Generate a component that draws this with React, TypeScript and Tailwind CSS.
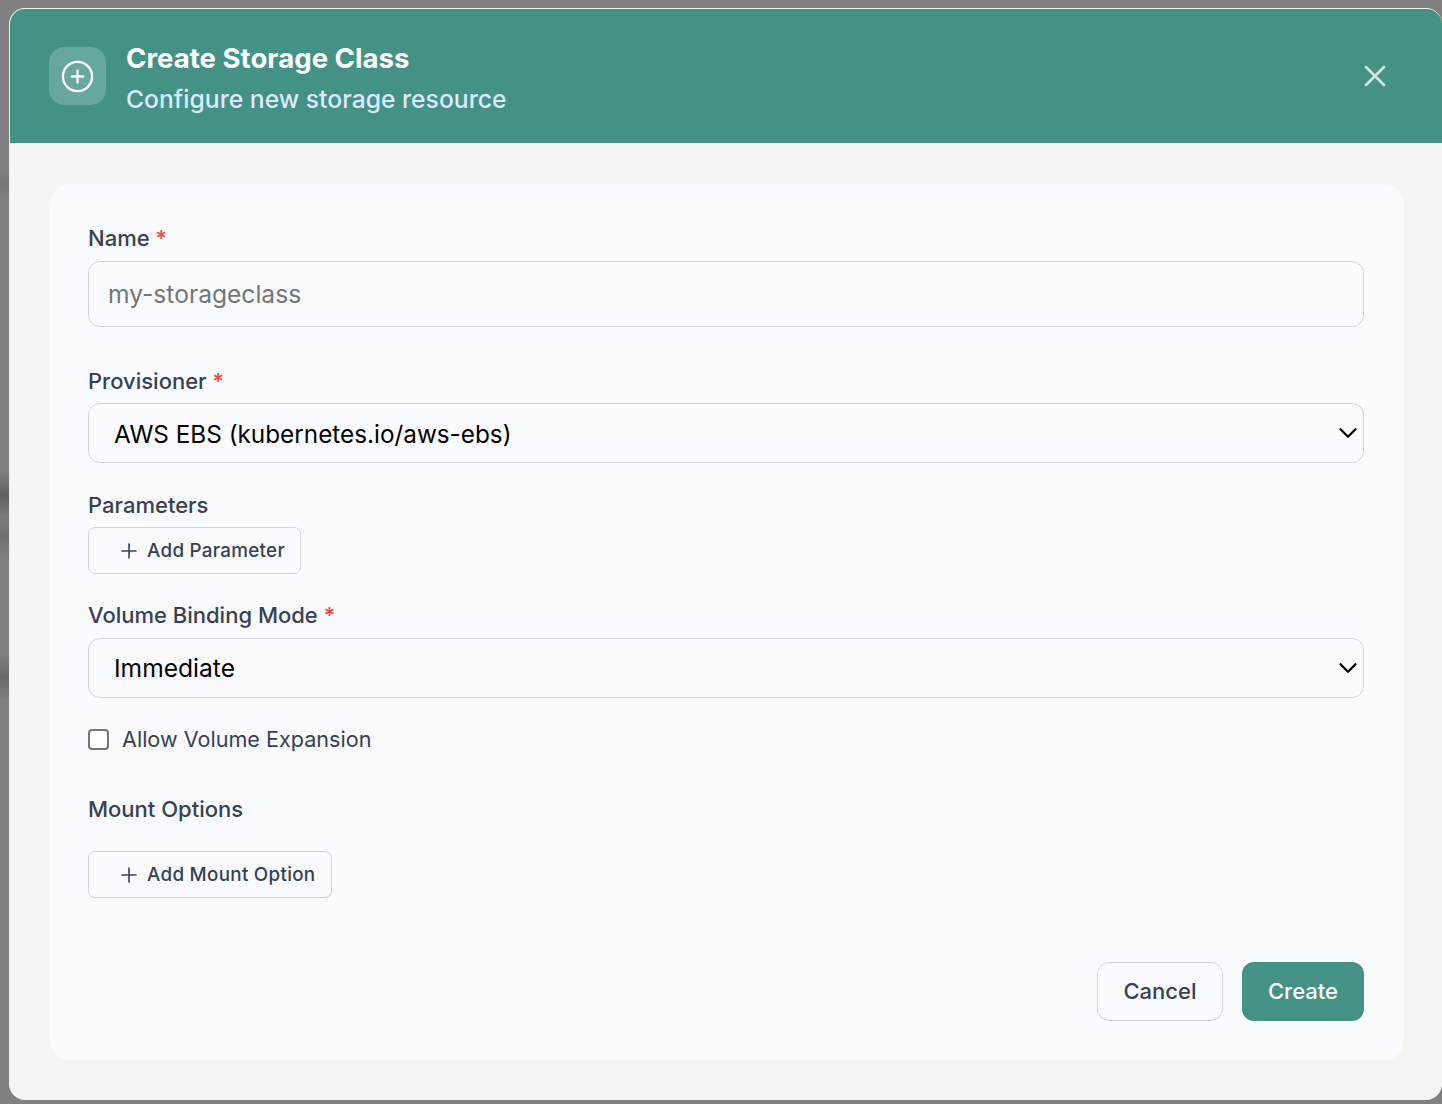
import React from "react";
import { CirclePlus, X, Plus, ChevronDown } from "lucide-react";

function Label({ children, required, className = "" }: { children: React.ReactNode; required?: boolean; className?: string }) {
  return (
    <div className={`text-[22px] leading-[28px] font-medium text-[#374151] ${className}`}>
      {children}
      {required && <span className="ml-[6px] text-[#ef4444]">*</span>}
    </div>
  );
}

function SelectBox({ value, className = "", textClass = "" }: { value: string; className?: string; textClass?: string }) {
  return (
    <div className={`relative h-[59.5px] ${className}`}>
      <select
        defaultValue={value}
        className={`h-full w-full appearance-none rounded-[12px] border border-[#d1d5db] bg-transparent pl-[25px] text-black outline-none ${textClass}`}
      >
        <option>{value}</option>
      </select>
      <ChevronDown className="pointer-events-none absolute right-[1px] top-[15px] h-[30px] w-[30px] text-black" strokeWidth={1.8} />
    </div>
  );
}

function AddButton({ label, className = "" }: { label: string; className?: string }) {
  return (
    <button className={`flex h-[47px] items-center rounded-[7px] border border-[#d1d5db] pl-[28px] text-[18.8px] font-medium tracking-[0.3px] text-[#374151] ${className}`}>
      <Plus className="mr-[6px] h-[24px] w-[24px]" strokeWidth={1.6} />
      <span className="pt-[2px]">{label}</span>
    </button>
  );
}

export default function App() {
  return (
    <div className="h-[1104px] w-[1442px] overflow-hidden bg-[linear-gradient(to_bottom,#808080_0,#808080_170px,#747474_184px,#808080_198px,#808080_470px,#5f6062_496px,#7a7a7c_516px,#6f7072_535px,#808080_560px,#808080_655px,#68696a_678px,#808080_700px,#808080_100%)] pl-[9px] pt-[8px] font-['Inter',sans-serif]">
      <div className="flex h-[1092px] w-[1433px] flex-col overflow-hidden rounded-[16px] border-l border-t border-[#f0f0f0] bg-[#f5f5f5]">
        <header className="flex h-[134px] shrink-0 items-center bg-[#439285] pl-[39px] pr-[49px]">
          <div className="flex h-[58px] w-[57px] items-center justify-center rounded-[15px] bg-white/20">
            <CirclePlus className="h-[35px] w-[35px] text-white" strokeWidth={1.6} />
          </div>
          <div className="ml-[20px] flex-1 pt-[2px]">
            <h1 className="text-[27.6px] leading-[36px] font-[650] text-white">Create Storage Class</h1>
            <p className="mt-[7px] text-[24.7px] leading-[32px] font-medium text-[#dbeafe]">Configure new storage resource</p>
          </div>
          <X className="h-[36px] w-[36px] text-[#d1e7e2]" strokeWidth={1.8} />
        </header>
        <main className="px-[40px] pt-[41px]">
          <div className="flex h-[876px] w-[1354px] flex-col rounded-[20px] bg-[#fafbfe] pl-[38px] pr-[40px] pt-[40px]">
            <Label required className="text-[#1f2937]">Name</Label>
            <input
              placeholder="my-storageclass"
              className="mt-[9px] h-[66px] w-full shrink-0 rounded-[12px] border border-[#d1d5db] bg-transparent px-[19px] text-[24.6px] text-black outline-none placeholder:text-[#757575]"
            />
            <Label required className="mt-[40px]">Provisioner</Label>
            <SelectBox value="AWS EBS (kubernetes.io/aws-ebs)" className="mt-[8px]" textClass="pt-[3px] text-[24.3px]" />
            <Label className="mt-[28.5px]">Parameters</Label>
            <AddButton label="Add Parameter" className="mt-[8px] w-[213px]" />
            <Label required className="mt-[27px]">Volume Binding Mode</Label>
            <SelectBox value="Immediate" className="mt-[9px]" textClass="pt-[1px] text-[24.6px]" />
            <label className="mt-[27.5px] flex items-center text-[#374151]">
              <span className="h-[21px] w-[21px] rounded-[4px] border-2 border-[#767676] bg-white" />
              <span className="ml-[13px] text-[21.6px] leading-[28px]">Allow Volume Expansion</span>
            </label>
            <Label className="mt-[42px]">Mount Options</Label>
            <AddButton label="Add Mount Option" className="mt-[28px] w-[244px]" />
            <div className="mt-[64px] flex justify-end gap-[19px]">
              <button className="h-[59px] w-[126px] rounded-[12px] border border-[#d1d5db] text-[22px] font-medium text-[#374151]">Cancel</button>
              <button className="h-[59px] w-[122px] rounded-[12px] bg-[#439285] text-[22px] font-medium text-white">Create</button>
            </div>
          </div>
        </main>
      </div>
    </div>
  );
}
